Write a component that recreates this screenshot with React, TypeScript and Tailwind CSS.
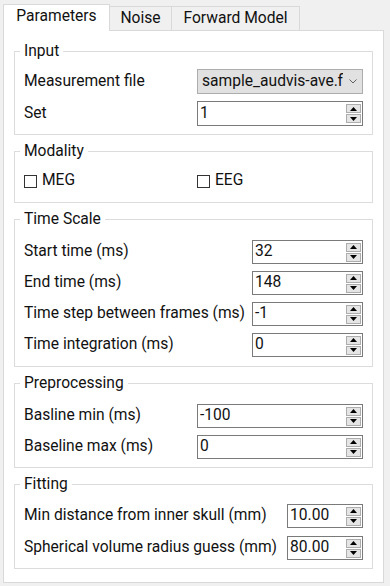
import { useState } from "react";

type Row = { label: string; value: string };

const timeRows: Row[] = [
  { label: "Start time (ms)", value: "32" },
  { label: "End time (ms)", value: "148" },
  { label: "Time step between frames (ms)", value: "-1" },
  { label: "Time integration (ms)", value: "0" },
];

const preprocRows: Row[] = [
  { label: "Basline min (ms)", value: "-100" },
  { label: "Baseline max (ms)", value: "0" },
];

const fitRows: Row[] = [
  { label: "Min distance from inner skull (mm)", value: "10.00" },
  { label: "Spherical volume radius guess (mm)", value: "80.00" },
];

function SpinBox({ value }: { value: string }) {
  return (
    <div className="flex h-[24px] items-stretch border border-[#7a7a7a] bg-white">
      <div className="flex flex-1 items-center overflow-hidden pl-[2px] leading-none">{value}</div>
      <div className="mr-[1px] flex w-[15px] flex-col justify-center gap-[1px]">
        <div className="flex h-[9px] items-center justify-center border border-[#adadad] bg-[#e5e5e5]">
          <svg width="7" height="4" viewBox="0 0 7 4">
            <path d="M3.5 0 L7 4 L0 4 Z" fill="#000" />
          </svg>
        </div>
        <div className="flex h-[9px] items-center justify-center border border-[#adadad] bg-[#e5e5e5]">
          <svg width="7" height="4" viewBox="0 0 7 4">
            <path d="M0 0 L7 0 L3.5 4 Z" fill="#000" />
          </svg>
        </div>
      </div>
    </div>
  );
}

function Group({ title, className, children }: { title: string; className?: string; children: React.ReactNode }) {
  return (
    <fieldset className={`min-w-0 border border-[#dcdcdc] px-[5px] ${className ?? ""}`}>
      <legend className="px-[4px] leading-[18px]">{title}</legend>
      <div className="px-[4px]">{children}</div>
    </fieldset>
  );
}

function FormRows({ rows, labelWidth, gap }: { rows: Row[]; labelWidth: string; gap: string }) {
  return (
    <div className={`grid ${labelWidth} ${gap}`}>
      {rows.map((r) => (
        <div key={r.label} className="contents">
          <div className="flex h-[24px] items-center whitespace-nowrap">{r.label}</div>
          <SpinBox value={r.value} />
        </div>
      ))}
    </div>
  );
}

function CheckBox({ label }: { label: string }) {
  const [checked, setChecked] = useState(false);
  return (
    <button className="flex h-[22px] items-center gap-[5px]" onClick={() => setChecked(!checked)}>
      <span className="flex h-[13px] w-[13px] items-center justify-center border border-[#333] bg-white">
        {checked ? (
          <svg width="9" height="9" viewBox="0 0 9 9">
            <path d="M1 4.5 L3.5 7 L8 1.5" stroke="#000" strokeWidth="1.4" fill="none" />
          </svg>
        ) : null}
      </span>
      <span>{label}</span>
    </button>
  );
}

export default function App() {
  const [tab, setTab] = useState(0);
  const tabs = [
    { name: "Parameters", w: "w-[107px]" },
    { name: "Noise", w: "w-[62px]" },
    { name: "Forward Model", w: "w-[128px]" },
  ];

  return (
    <div
      className="flex h-[586px] w-[390px] flex-col bg-[#f0f0f0] pl-[3px] pr-[6px] pt-[4px] pb-[3px] text-[15.6px] text-[#111]"
      style={{ fontFamily: "Roboto, 'Noto Sans', sans-serif" }}
    >
      <div className="flex h-[26px] items-end">
        {tabs.map((t, i) =>
          i === tab ? (
            <button
              key={t.name}
              onClick={() => setTab(i)}
              className={`relative z-10 -mb-[1px] flex h-[27px] items-center justify-center border-x border-t border-[#d9d9d9] bg-white pb-[3px] ${t.w} ${i > 0 ? "-ml-[1px]" : ""}`}
            >
              {t.name}
            </button>
          ) : (
            <button
              key={t.name}
              onClick={() => setTab(i)}
              className={`flex h-[24px] items-center justify-center border-t border-r border-[#d9d9d9] bg-[#f0f0f0] ${t.w} ${i === 0 ? "border-l" : ""}`}
            >
              {t.name}
            </button>
          ),
        )}
      </div>

      <div className="flex flex-1 flex-col gap-[7px] border border-[#d9d9d9] bg-white px-[10px] pt-[11px]">
        <Group title="Input" className="pt-[9px] pb-[8px]">
          <div className="grid grid-cols-[173px_minmax(0,1fr)] gap-y-[7px]">
            <div className="flex h-[25px] items-center">Measurement file</div>
            <div className="flex h-[25px] min-w-0 items-center border border-[#adadad] bg-[#e1e1e1]">
              <div className="min-w-0 flex-1 overflow-hidden whitespace-nowrap pl-[4px]">sample_audvis-ave.fif</div>
              <div className="flex w-[19px] shrink-0 items-center justify-center">
                <svg width="8" height="5" viewBox="0 0 8 5">
                  <path d="M0.5 0.5 L4 4 L7.5 0.5" stroke="#606060" strokeWidth="1" fill="none" />
                </svg>
              </div>
            </div>
            <div className="flex h-[25px] items-center">Set</div>
            <div className="h-[25px] [&>div]:h-[25px]">
              <SpinBox value="1" />
            </div>
          </div>
        </Group>

        <Group title="Modality" className="pt-[10px] pb-[10px]">
          <div className="grid grid-cols-[173px_minmax(0,1fr)]">
            <CheckBox label="MEG" />
            <CheckBox label="EEG" />
          </div>
        </Group>

        <Group title="Time Scale" className="pt-[12px] pb-[9px]">
          <FormRows rows={timeRows} labelWidth="grid-cols-[228px_minmax(0,1fr)]" gap="gap-y-[7px]" />
        </Group>

        <Group title="Preprocessing" className="pt-[12px] pb-[8px]">
          <FormRows rows={preprocRows} labelWidth="grid-cols-[173px_minmax(0,1fr)]" gap="gap-y-[7px]" />
        </Group>

        <Group title="Fitting" className="pt-[11px] pb-[8px]">
          <FormRows rows={fitRows} labelWidth="grid-cols-[263px_minmax(0,1fr)]" gap="gap-y-[8px]" />
        </Group>
      </div>
    </div>
  );
}
